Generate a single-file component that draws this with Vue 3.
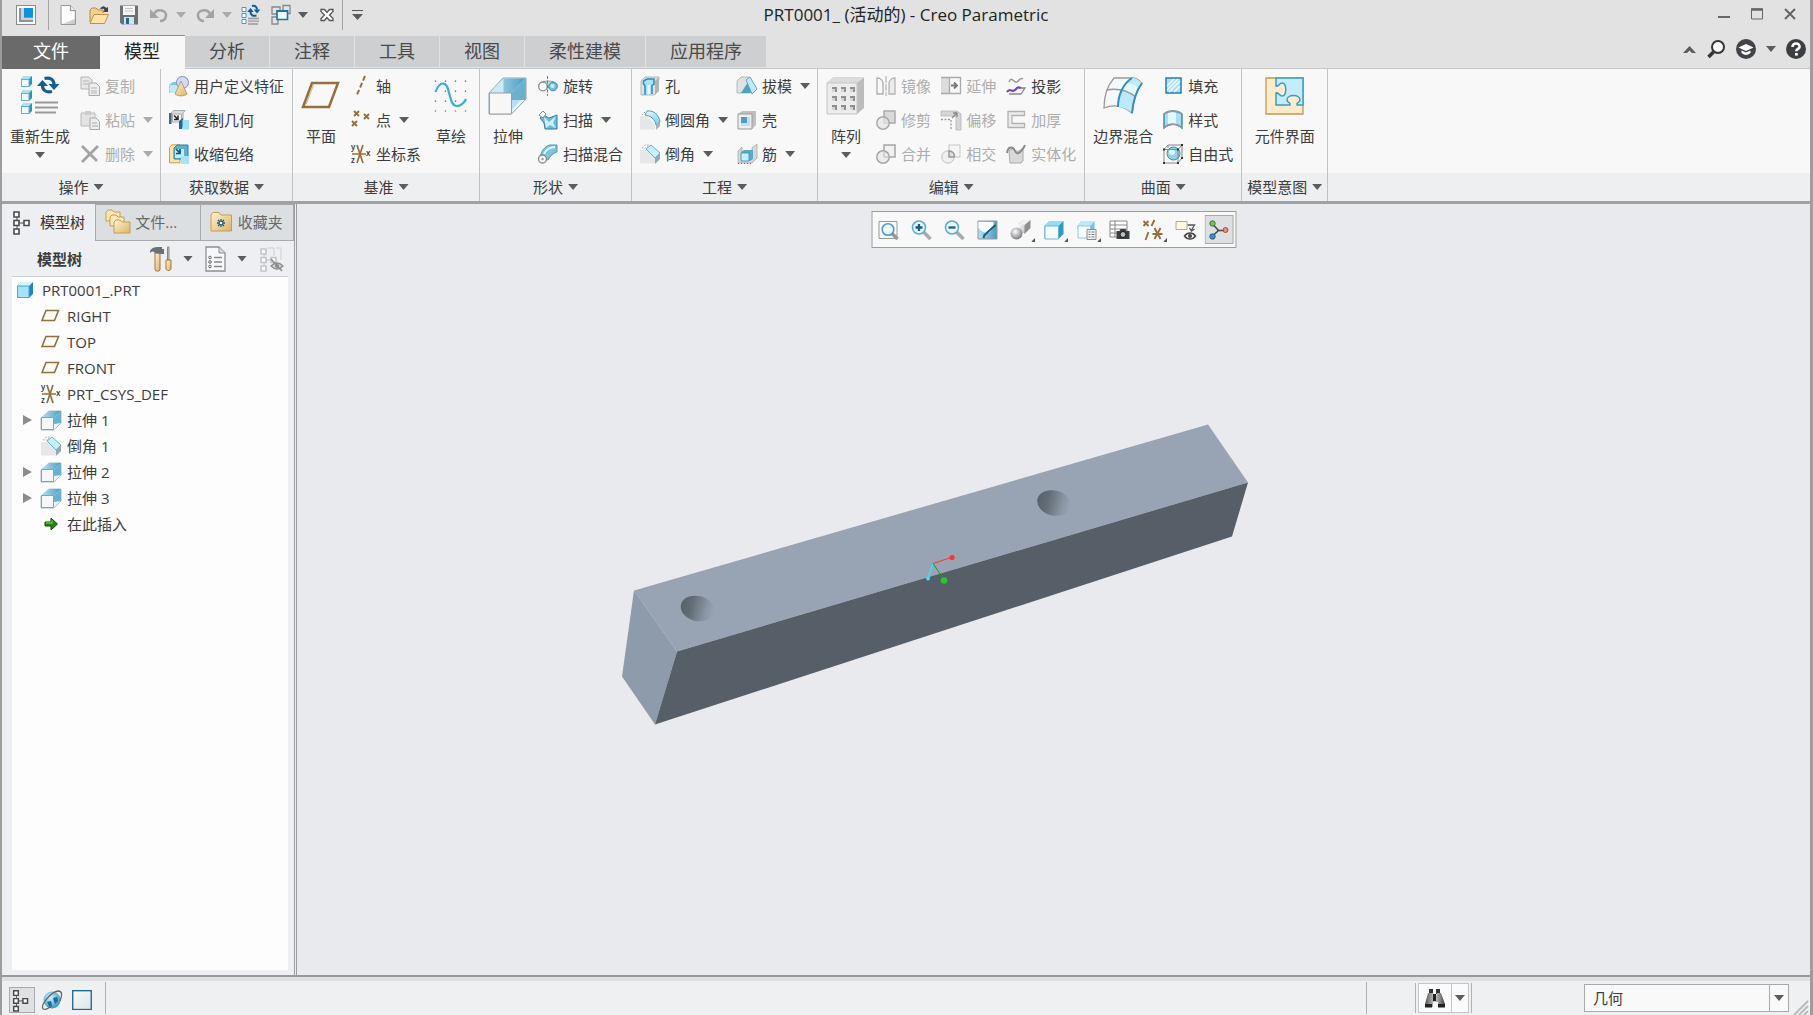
<template>
  <div class="window">
    <svg class="shared-defs" aria-hidden="true">
      <defs>
        <linearGradient id="g-blue" x1="0" y1="0" x2="1" y2="1">
          <stop offset="0" stop-color="#f0fbff" />
          <stop offset="1" stop-color="#7fc8e4" />
        </linearGradient>
        <linearGradient id="g-deep" x1="0" y1="0" x2="1" y2="0">
          <stop offset="0" stop-color="#b5e2f2" />
          <stop offset="1" stop-color="#4a9cc0" />
        </linearGradient>
        <linearGradient id="g-grey" x1="0" y1="0" x2="1" y2="1">
          <stop offset="0" stop-color="#fafafa" />
          <stop offset="1" stop-color="#c4c4c4" />
        </linearGradient>
        <linearGradient id="g-gold" x1="0" y1="0" x2="1" y2="1">
          <stop offset="0" stop-color="#fff4d4" />
          <stop offset="1" stop-color="#dcb466" />
        </linearGradient>
        <linearGradient id="g-dark" x1="0" y1="0" x2="1" y2="0">
          <stop offset="0" stop-color="#555" />
          <stop offset="0.5" stop-color="#ccc" />
          <stop offset="1" stop-color="#444" />
        </linearGradient>
        <linearGradient id="g-hole" x1="0" y1="0" x2="1" y2="0">
          <stop offset="0" stop-color="#59626b" />
          <stop offset="0.3" stop-color="#626c76" />
          <stop offset="0.75" stop-color="#8995a4" />
          <stop offset="1" stop-color="#98a4b4" />
        </linearGradient>
        <radialGradient id="g-ball" cx="0.4" cy="0.35" r="0.7">
          <stop offset="0" stop-color="#fff" />
          <stop offset="1" stop-color="#6f7276" />
        </radialGradient>
        <radialGradient id="g-globe" cx="0.4" cy="0.35" r="0.7">
          <stop offset="0" stop-color="#d5f3ff" />
          <stop offset="1" stop-color="#2491c4" />
        </radialGradient>
      </defs>
    </svg>

    <header class="titlebar">
      <div class="quick">
        <button class="quick-btn app" title="Creo"><svg viewBox="0 0 20 20" v-html="icons.app" /></button>
        <i class="quick-sep"></i>
        <template v-for="q in quickTools" :key="q.icon">
          <button class="quick-btn" :title="q.title">
            <svg viewBox="0 0 20 20" v-html="icons[q.icon]" />
          </button>
          <button v-if="q.menu" class="quick-arrow" :title="q.title + '菜单'">
            <span class="arrow" :class="{ off: q.off }"></span>
          </button>
        </template>
        <i class="quick-sep end"></i>
        <button class="quick-more" title="自定义"><span class="arrow wide"></span></button>
      </div>
      <h1 class="title">PRT0001_ (活动的) - Creo Parametric</h1>
      <div class="win-controls">
        <button v-for="w in ['minimize', 'maximize', 'close']" :key="w" :title="w">
          <svg viewBox="0 0 14 14" v-html="icons[w]" />
        </button>
      </div>
    </header>

    <nav class="tabbar">
      <button class="tab file">文件</button>
      <button
        v-for="t in tabs"
        :key="t"
        class="tab"
        :class="{ active: t === activeTab }"
        @click="activeTab = t"
      >{{ t }}</button>
      <div class="tab-tools">
        <button title="最小化功能区"><svg class="chev" viewBox="0 0 13 7"><path d="M0 7 6.500 0 13 7H9L6.500 4.500 4 7Z" fill="#5c5c5c" /></svg></button>
        <button title="搜索"><svg class="tool" viewBox="0 0 20 20" v-html="icons.search" /></button>
        <button title="学习"><svg class="tool" viewBox="0 0 20 20" v-html="icons.learn" /></button>
        <button title="学习菜单"><span class="arrow"></span></button>
        <button title="帮助"><svg class="tool" viewBox="0 0 20 20" v-html="icons.help" /></button>
      </div>
    </nav>

    <section class="ribbon">
      <div v-for="g in groups" :key="g.name" class="group">
        <div class="group-body">
          <template v-for="(c, i) in g.cols" :key="i">
            <button v-if="c.big" class="big">
              <svg viewBox="0 0 40 40" v-html="icons[c.big]" />
              <span>{{ c.label }}</span>
              <span v-if="c.menu" class="arrow"></span>
            </button>
            <div v-else class="col">
              <button
                v-for="r in c.rows"
                :key="r.label"
                class="cmd"
                :class="{ off: r.off }"
                :disabled="r.off"
              >
                <svg viewBox="0 0 20 20" v-html="icons[r.icon]" />
                <span>{{ r.label }}</span>
                <span v-if="r.menu" class="arrow" :class="{ off: r.off }"></span>
              </button>
            </div>
          </template>
        </div>
        <button class="group-name">{{ g.name }}<span class="arrow"></span></button>
      </div>
      <div class="ribbon-rest"></div>
    </section>

    <main class="work">
      <aside class="sidebar">
        <div class="side-tabs">
          <button class="side-tab active"><svg viewBox="0 0 26 26" v-html="icons.treeTab" />模型树</button>
          <button class="side-tab files"><svg viewBox="0 0 26 26" v-html="icons.folders" />文件...</button>
          <button class="side-tab"><svg viewBox="0 0 26 26" v-html="icons.favorite" />收藏夹</button>
        </div>
        <div class="tree-head">
          <strong>模型树</strong>
          <button title="设置"><svg viewBox="0 0 26 26" v-html="icons.tools" /><span class="arrow"></span></button>
          <button title="显示"><svg viewBox="0 0 26 26" v-html="icons.list" /><span class="arrow"></span></button>
          <button title="隐藏"><svg viewBox="0 0 26 26" v-html="icons.treeHide" /></button>
        </div>
        <ul class="tree">
          <li class="root"><svg viewBox="0 0 20 20" v-html="icons.part" />PRT0001_.PRT</li>
          <li v-for="n in nodes" :key="n.name">
            <i class="expander" :class="{ shown: n.children }"></i>
            <svg viewBox="0 0 20 20" v-html="icons[n.icon]" />{{ n.name }}
          </li>
        </ul>
      </aside>

      <section class="canvas">
        <svg class="model" viewBox="297 205 1513 770" preserveAspectRatio="xMidYMid meet">
          <polygon points="634,591 1208,425 1248,483 677,652" fill="#98a4b4" />
          <polygon points="634,591 677,652 655,725 622,677" fill="#8e9baa" />
          <polygon points="677,652 1248,483 1232,537 655,725" fill="#565f67" />
          <ellipse cx="697.500" cy="609" rx="17" ry="12.500" fill="url(#g-hole)" transform="rotate(14 697.500 609)" />
          <ellipse cx="1054" cy="503.500" rx="17" ry="12.500" fill="url(#g-hole)" transform="rotate(14 1054 503.500)" />
          <path d="M933 564 951 558" stroke="#f33" />
          <path d="M933 564 928 579" stroke="#2fe8f8" stroke-width="1.300" />
          <path d="M933 564 944 580" stroke="#1a9a1a" />
          <circle cx="952" cy="558" r="2.600" fill="#f33" />
          <circle cx="928" cy="579" r="2" fill="#2fe8f8" />
          <circle cx="944" cy="581" r="3.300" fill="#22cc22" />
        </svg>
        <div class="view-bar">
          <button
            v-for="v in viewTools"
            :key="v.icon"
            :title="v.title"
            :class="{ on: v.on, more: v.more }"
          >
            <svg viewBox="0 0 20 20" v-html="icons[v.icon]" />
          </button>
        </div>
      </section>
    </main>

    <footer class="status">
      <button class="status-btn on" title="模型树"><svg viewBox="0 0 26 26" v-html="icons.treeTab" /></button>
      <button class="status-btn" title="浏览器"><svg viewBox="0 0 20 20" v-html="icons.globe" /></button>
      <button class="status-btn" title="全屏"><svg viewBox="0 0 20 20" v-html="icons.screen" /></button>
      <i class="status-sep"></i>
      <i class="status-sep push"></i>
      <div class="find">
        <button title="查找"><svg viewBox="0 0 20 20" v-html="icons.binoculars" /></button>
        <button class="find-menu" title="查找菜单"><span class="arrow"></span></button>
      </div>
      <div class="filter">
        <select v-model="filter" aria-label="选择过滤器">
          <option>几何</option>
          <option>特征</option>
          <option>基准</option>
        </select>
        <span class="filter-arrow"><span class="arrow"></span></span>
      </div>
      <svg class="grip" viewBox="0 0 14 14"><path d="M0 14 14 0M5 14 14 5M10 14 14 10" stroke="#b9bcbf" stroke-width="2" /></svg>
    </footer>
  </div>
</template>

<script setup>
import { ref } from 'vue'

const activeTab = ref('模型')
const filter = ref('几何')

const tabs = ['模型', '分析', '注释', '工具', '视图', '柔性建模', '应用程序']

const quickTools = [
  { icon: 'newFile', title: '新建' },
  { icon: 'open', title: '打开' },
  { icon: 'save', title: '保存' },
  { icon: 'undo', title: '撤消', menu: true, off: true },
  { icon: 'redo', title: '重做', menu: true, off: true },
  { icon: 'regenSmall', title: '重新生成' },
  { icon: 'windows', title: '窗口', menu: true },
  { icon: 'closeWin', title: '关闭' }
]

const groups = [
  {
    name: '操作',
    cols: [
      { big: 'regen', label: '重新生成', menu: true },
      {
        rows: [
          { icon: 'copy', label: '复制', off: true },
          { icon: 'paste', label: '粘贴', off: true, menu: true },
          { icon: 'remove', label: '删除', off: true, menu: true }
        ]
      }
    ]
  },
  {
    name: '获取数据',
    cols: [
      {
        rows: [
          { icon: 'udf', label: '用户定义特征' },
          { icon: 'copyGeom', label: '复制几何' },
          { icon: 'shrink', label: '收缩包络' }
        ]
      }
    ]
  },
  {
    name: '基准',
    cols: [
      { big: 'plane', label: '平面' },
      {
        rows: [
          { icon: 'axis', label: '轴' },
          { icon: 'point', label: '点', menu: true },
          { icon: 'csys', label: '坐标系' }
        ]
      },
      { big: 'sketch', label: '草绘' }
    ]
  },
  {
    name: '形状',
    cols: [
      { big: 'extrude', label: '拉伸' },
      {
        rows: [
          { icon: 'revolve', label: '旋转' },
          { icon: 'sweep', label: '扫描', menu: true },
          { icon: 'sweepBlend', label: '扫描混合' }
        ]
      }
    ]
  },
  {
    name: '工程',
    cols: [
      {
        rows: [
          { icon: 'hole', label: '孔' },
          { icon: 'round', label: '倒圆角', menu: true },
          { icon: 'chamfer', label: '倒角', menu: true }
        ]
      },
      {
        rows: [
          { icon: 'draft', label: '拔模', menu: true },
          { icon: 'shell', label: '壳' },
          { icon: 'rib', label: '筋', menu: true }
        ]
      }
    ]
  },
  {
    name: '编辑',
    cols: [
      { big: 'pattern', label: '阵列', menu: true },
      {
        rows: [
          { icon: 'mirror', label: '镜像', off: true },
          { icon: 'trim', label: '修剪', off: true },
          { icon: 'merge', label: '合并', off: true }
        ]
      },
      {
        rows: [
          { icon: 'extend', label: '延伸', off: true },
          { icon: 'offset', label: '偏移', off: true },
          { icon: 'intersect', label: '相交', off: true }
        ]
      },
      {
        rows: [
          { icon: 'project', label: '投影' },
          { icon: 'thicken', label: '加厚', off: true },
          { icon: 'solidify', label: '实体化', off: true }
        ]
      }
    ]
  },
  {
    name: '曲面',
    cols: [
      { big: 'blend', label: '边界混合' },
      {
        rows: [
          { icon: 'fill', label: '填充' },
          { icon: 'style', label: '样式' },
          { icon: 'freestyle', label: '自由式' }
        ]
      }
    ]
  },
  {
    name: '模型意图',
    cols: [{ big: 'puzzle', label: '元件界面' }]
  }
]

const nodes = [
  { icon: 'planeSmall', name: 'RIGHT' },
  { icon: 'planeSmall', name: 'TOP' },
  { icon: 'planeSmall', name: 'FRONT' },
  { icon: 'csys', name: 'PRT_CSYS_DEF' },
  { icon: 'extrudeSmall', name: '拉伸 1', children: true },
  { icon: 'chamfer', name: '倒角 1' },
  { icon: 'extrudeSmall', name: '拉伸 2', children: true },
  { icon: 'extrudeSmall', name: '拉伸 3', children: true },
  { icon: 'insert', name: '在此插入' }
]

const viewTools = [
  { icon: 'refit', title: '重新调整' },
  { icon: 'zoomIn', title: '放大' },
  { icon: 'zoomOut', title: '缩小' },
  { icon: 'repaint', title: '重画' },
  { icon: 'shading', title: '渲染选项', more: true },
  { icon: 'display', title: '显示样式', more: true },
  { icon: 'saved', title: '已保存方向', more: true },
  { icon: 'views', title: '视图管理器' },
  { icon: 'datums', title: '基准显示过滤器', more: true },
  { icon: 'notes', title: '注释显示' },
  { icon: 'spin', title: '旋转中心', on: true }
]

const cube = (x, y) =>
  `<path d="M${x} ${y + 3}l3-3h8v8l-3 3H${x}z" fill="#2f93bd"/><path d="M${x} ${y + 3}l3-3h8l-3 3z" fill="#a9e2f5"/><path d="M${x + 0.5} ${y + 3.5}h7.500v7h-7.500z" fill="#f1fbff" stroke="#5fb4d4"/>`

const cross = (x, y) => `<path d="M${x} ${y}l5 5m0-5l-5 5" stroke="#94703c" stroke-width="1.900"/>`

const nodeBoxes = (color) =>
  `<path d="M7 8v12M9 14h8" stroke="${color}" /><g fill="#fff" stroke="${color}" stroke-width="1.600"><path d="M4 3h5v5H4zM4 11.500h5v5H4zM4 20h5v5H4zM14 11.500h5v5h-5z"/></g>`

const icons = {
  // title bar
  app: '<rect x=".5" y=".5" width="19" height="19" fill="#fff" stroke="#8b8b8b"/><path d="M3 3h14v14H3z" fill="#8b949b"/><path d="M5 3h3v10h9v2H5z" fill="#ccd3d8"/><path d="M8 3h9v9H8z" fill="#0d93dc"/>',
  newFile: '<path d="M2 .5h9.500l5 5v14H2z" fill="url(#g-grey)" stroke="#9a9a9a"/><path d="M3 1.500h7.500v5h5V14L3 19z" fill="#fff"/><path d="M11.500.5v5h5" fill="#eee" stroke="#999"/>',
  open: '<path d="M1 17V5l2-2h4l2 2h5v3" fill="#f3d18b" stroke="#b98a3d"/><path d="M1 18.500 5 9.500h14.500l-4 9z" fill="#fbe3ad" stroke="#c19343"/><path d="M11 4c2-4 5-3 6-1l2-1v5h-5l1.500-2c-1-2-2-1-4.500-1z" fill="#444"/>',
  save: '<path d="M1 .5h18v19H3l-2-2z" fill="#6a7176"/><path d="M4 1h12v9H4z" fill="#f4f4f4"/><path d="M6 3.500h8M6 6h8" stroke="#c5c5c5"/><path d="M5 12h10v7.500H5z" fill="#cfe5ee"/><path d="M7 13h3v6H7z" fill="#2c6580"/>',
  undo: '<path d="M5 9c3-6 13-4 12 2-.5 3-3 5-6 5" fill="none" stroke="#a3a3a3" stroke-width="2.500"/><path d="M1 4v9h9z" fill="#a3a3a3"/>',
  redo: '<path d="M15 9C12 3 2 5 3 11c.5 3 3 5 6 5" fill="none" stroke="#a3a3a3" stroke-width="2.500"/><path d="M19 4v9h-9z" fill="#a3a3a3"/>',
  regenSmall: '<g fill="#fff" stroke="#3c9dc4"><path d="M1 2.500h4v4H1zM1 8.500h4v4H1zM1 14.500h4v4H1z"/></g><path d="M7 13.500h11M7 16.200h11M7 19h10" stroke="#999" stroke-width="1.300"/><path d="M11 1c3-1 5 1 5 3.500M15.500 10.500c-4 1-6-1-6-3.500" fill="none" stroke="#0d5c94" stroke-width="2"/><path d="M12.800 4.500h6.500L16 8.500zM6.200 7h6.500L9.500 3z" fill="#0d5c94"/>',
  windows: '<path d="M1 2h8v7H1zM12 .5h7v8h-7zM1 12h6v7H1z" fill="#e5e5e5" stroke="#888" stroke-width="1.300"/><path d="M6 6h10.500v8.500H6z" fill="#eefaff" stroke="#1876a6" stroke-width="1.600"/><path d="M5.200 6h12" stroke="#1876a6" stroke-width="2"/>',
  closeWin: '<path d="M4 4.500h3.500L10 7.500l2.500-3H16v2L12.500 10l3.500 3.500v2h-3.500l-2.500-3-2.500 3H4v-2L7.500 10 4 6.500z" fill="#fff" stroke="#555" stroke-width="1.300"/>',
  minimize: '<path d="M1 10h12" stroke="#666" stroke-width="2"/>',
  maximize: '<path d="M1.500 2h11v10h-11z" fill="none" stroke="#666"/><path d="M1 2.500h12" stroke="#666" stroke-width="2.500"/>',
  close: '<path d="m2 2 10 10M12 2 2 12" stroke="#666" stroke-width="2"/>',
  search: '<circle cx="12" cy="8" r="6" fill="#f7fafc" stroke="#333" stroke-width="2"/><path d="m7.500 13-5 5" stroke="#333" stroke-width="3.500"/>',
  learn: '<circle cx="10" cy="10" r="10" fill="#404347"/><path d="m2.500 8.500 7.500-3.500 7.500 3.500L10 12z" fill="#fff"/><path d="M5.500 11.500v2.500c3 2.500 6 2.500 9 0v-2.500L10 13.500z" fill="#fff"/>',
  help: '<circle cx="10" cy="10" r="10" fill="#3c3e41"/><path d="M6.500 8c0-5 7.500-4.500 7 0-.3 2-3.200 2-3.200 4.300" fill="none" stroke="#fff" stroke-width="2.600"/><path d="M9 14h2.800v2.600H9z" fill="#fff"/>',

  // ribbon, large
  regen: `${cube(1, 0)}${cube(1, 14)}${cube(1, 27)}<path d="M15 26.500h23M15 31.500h23M15 36.500h21" stroke="#999" stroke-width="2"/><path d="M24.500 2.500c6-1.500 9.500 1.500 9.500 6M32 15.500c-6 1.500-9.500-1.500-9.500-6" fill="none" stroke="#125e92" stroke-width="3.200"/><path d="M28.500 8h11L34 14zM17 10h11l-5.500-6z" fill="#125e92"/>`,
  plane: '<path d="M2 31 11 7h26L28 31z" fill="none" stroke="#94703c" stroke-width="2.500"/><path d="M5 28.500 12.500 9" stroke="#cdb184" fill="none"/>',
  sketch: '<path d="M4.500 4.500v31M14.500 4.500v31M24.500 4.500v31M34.500 4.500v31" stroke="#555" stroke-width="1.300" stroke-dasharray="1.300 8.700"/><path d="M4.500 16C7 9 9 7.500 12 7.500c8 0 5 22.500 13.500 22.500 4 0 7-2 9.500-7" fill="none" stroke="#3aaee0" stroke-width="2.200"/>',
  extrude: '<path d="M1 17 15 2h23v21L23 38H1z" fill="#eef6fa" stroke="#8fa6b0"/><path d="M1.500 17 15.500 2.500H37.500L23.500 17z" fill="url(#g-deep)"/><path d="M15.500 2.500V17H2z" fill="#ccebf6"/><path d="M23.500 17 37.500 2.500v22l-14-.5z" fill="#6bb0cd"/><path d="M23.500 38V34L33 24h4.500z" fill="#e2f8ff"/><path d="M23.500 34V24H33z" fill="#b5dff0"/><path d="M1.500 17h22v21h-22z" fill="#f7f7f7" stroke="#9c9c9c"/><path d="M37.500 2.500v21L23.500 38" fill="none" stroke="#9aa7ad"/>',
  pattern: '<path d="M1 7 7 1.500h31V32l-7 6H1z" fill="#bcbcbc"/><path d="M1 7 7 1.500h31L31 7z" fill="#dcdcdc"/><path d="M1 7h30v31H1z" fill="#ececec" stroke="#c4c4c4"/><g fill="#8f8f8f"><path d="M6 11h5v5H6zM15 11h5v5h-5zM24 11h5v5h-5zM6 20h5v5H6zM15 20h5v5h-5zM24 20h5v5h-5zM6 29h5v5H6zM15 29h5v5h-5zM24 29h5v5h-5z"/></g><g fill="#d6d6d6"><path d="M6 13h3v3H6zM15 13h3v3h-3zM24 13h3v3h-3zM6 22h3v3H6zM15 22h3v3h-3zM24 22h3v3h-3zM6 31h3v3H6zM15 31h3v3h-3zM24 31h3v3h-3z"/></g>',
  blend: '<path d="M1 32C1 20 5 9 11 2h18c4 0 7 2 10 5-6 8-9 19-10 30-8-7-18-9-28-5z" fill="#f4f8fa" stroke="#999" stroke-width="1.300"/><path d="M29 2c4 0 7 2 10 5-6 8-9 19-10 30-4-4-9-6-14-6 1-12 5-22 14-29z" fill="#bdeafa"/><path d="M24 7c4 0 9 2 12 6l-4 8c-4-3-9-6-14-6z" fill="#e2f7fe"/><path d="M4 14c11-2 21 1 29 7" fill="none" stroke="#999" stroke-width="1.500"/><path d="M29 2c-9 6-14 17-14 29M39 7c-6 8-9 19-10 30" fill="none" stroke="#2f8fbc" stroke-width="2"/>',
  puzzle: '<path d="M1 2h37v36H1z" fill="#fdebc9" stroke="#bd9a52" stroke-width="1.300"/><path d="M11 2h27v27h-6c-1-3 3-2 3-5 0-6-13-6-13 0 0 3 4 2 3 5H11V17c3-1 3 3 6 3 5 0 5-13 0-13-3 0-3 4-6 3z" fill="#c5ecfa" stroke="#3a9cc6" stroke-width="1.500"/>',

  // ribbon, small
  copy: '<path d="M1 1h8l3 3v9H1z" fill="#e7e7e7" stroke="#b5b5b5"/><path d="M9 7h7l3.500 3.500v9H9z" fill="#eee" stroke="#a8a8a8"/><path d="M3 5h6M3 8h5M11 12h6M11 15h6M11 17h6" stroke="#b5b5b5"/>',
  paste: '<path d="M1 3h14v13H1z" fill="#e3e3e3" stroke="#bbb"/><path d="M5 1h6v4H5z" fill="#ccc"/><path d="M10 8h6l3.500 3.500v8H10z" fill="#eee" stroke="#a8a8a8"/><path d="M12 13h5M12 16h6" stroke="#aaa"/>',
  remove: '<path d="m2 2 15 15M18 2 2 18" stroke="#a3a3a3" stroke-width="2.800"/>',
  udf: '<path d="m0 9 4-3h9v8l-3 3H0z" fill="#79c7e4"/><path d="M.5 9h10v8H.5z" fill="#bfe9f7"/><circle cx="13.500" cy="6.500" r="6" fill="#d3daf6" stroke="#7f8cc6"/><path d="M12 5 6 18c3 2.500 9 2.500 12 0z" fill="url(#g-gold)" stroke="#b58b48" stroke-width=".8"/>',
  copyGeom: '<path d="M2 3 5 .5h11L14 3v7H2z" fill="#dcdcdc" stroke="#aaa"/><path d="M0 3h2.500v11H0z" fill="#466a80"/><path d="M3.500 4h9v8h-9z" fill="#f4f4f4" stroke="#aaa"/><path d="m5 5.500 3.500 3.500M9 5.500v4H5" stroke="#222" stroke-width="1.500" fill="none"/><path d="M10 11l4-3v8l-1 3h-3z" fill="#1c6a94"/><path d="M13.500 10H20v9.500h-6.500z" fill="#9be0fb"/>',
  shrink: '<path d="M.5 3.500 3 .8h8v18H.5z" fill="#fbe3ad" stroke="#c99c4a"/><path d="M5 4 8 1h11v11l-3 3H5z" fill="#5cb2d4" stroke="#2a82aa"/><path d="M6 5h9v9H6z" fill="#c2ecfa"/><path d="m7 5 4 4m0-4v4.500H7" stroke="#14506e" stroke-width="1.700" fill="none"/><path d="M12 12h8v8h-8z" fill="#a5e5fb"/>',
  axis: '<path d="m14 0-8.500 20" stroke="#94703c" stroke-width="2" stroke-dasharray="5 2.500"/>',
  point: `${cross(3, 1)}${cross(13, 4)}${cross(1, 11)}`,
  csys: '<path d="M1 10h14M6 1l6 18M12 1 6 19" stroke="#94703c" stroke-width="1.700"/><g fill="#333" font-family="Open Sans, sans-serif" font-size="8" font-weight="600"><text x="0" y="6">y</text><text x="0" y="19">z</text><text x="15" y="12">x</text></g>',
  revolve: '<path d="M1 8c3-4 15-4 18 0v3H1z" fill="#bfe2ee" stroke="#8aa"/><circle cx="5" cy="10.500" r="4.300" fill="#fafafa" stroke="#8d8d8d" stroke-width="1.300"/><circle cx="15" cy="10.500" r="4.300" fill="#6fc1e0" stroke="#3a8fb5"/><circle cx="14.500" cy="10" r="2" fill="#d5f2fb"/><path d="M9.500 0v20" stroke="#777" stroke-dasharray="3 1.500"/>',
  sweep: '<path d="m5 5 6 3 8-3v14H7L6 13 2 8z" fill="#6bbbd9" stroke="#2d82a6"/><path d="m6 7 5 5 7-6-3 7 3 5-6-3-4 3z" fill="#cdf0fa"/><path d="m1 5 4-4 3 3-3 4z" fill="#fafafa" stroke="#888"/>',
  sweepBlend: '<path d="M2 14C3 7 7 2 12 1h7v7c-4 1-7 4-9 8z" fill="#7dc4e0" stroke="#5597b2"/><path d="M6 10c2-4 5-7 11-7" fill="none" stroke="#e8f9ff" stroke-width="2"/><circle cx="4.500" cy="15" r="4" fill="#f7f7f7" stroke="#888" stroke-width="1.300"/><circle cx="4.500" cy="15" r="1.200" fill="#999"/>',
  hole: '<path d="m1 5 4-4h14l-1 14-4 4H1z" fill="#e1e1e1" stroke="#aaa" stroke-width=".8"/><path d="m15 5 4-4v14l-4 4z" fill="#b4b4b4"/><path d="M5 19V9.500L3.500 8V5L7 3h7v5l-2 1.500V18" fill="#a8e2f5" stroke="#2b8cb5" stroke-width="1.500"/><path d="M7.500 9H10v9H7.500z" fill="#e2f8ff"/>',
  round: '<path d="M0 6h7l8 9v4.500H0z" fill="#e5e6e8"/><path d="M2 5 5 2" stroke="#888" stroke-dasharray="1 2"/><path d="M7 1C14 0 19 5 20 12l-4 3C15 9 11 6 5 5z" fill="url(#g-blue)" stroke="#4ba0c2"/><path d="m16 15 4-3v4l-4 4z" fill="#a9b2b6"/>',
  chamfer: '<path d="M0 6h6l9 8v5.500H0z" fill="#e6e7e9"/><path d="m2 4 3-3h4L6 4z" fill="#fff" stroke="#bbb" stroke-dasharray="2 1"/><path d="m6 5 5-4 9 8-5 5z" fill="#c8f0fb" stroke="#64b1cb"/><path d="m15 14 5-5v6l-5 5z" fill="#95a9b2"/>',
  draft: '<path d="m0 5 4-4h8l1 16H0z" fill="#e1e1e1" stroke="#aaa" stroke-width=".8"/><path d="m4 17 7-11 4 11z" fill="#50a1c3"/><path d="m9 4 4-3 7 12-5 5z" fill="#bfeafa" stroke="#5aa9c7"/>',
  shell: '<path d="m1 4 4-3h14v14l-4 4H1z" fill="#c0c0c0"/><path d="M1 4h14v15H1z" fill="#eee" stroke="#999"/><path d="M4 7h9v9H4z" fill="#4d9dc0"/><path d="M4 13h6V7h3v9H4z" fill="#b9e3f1"/>',
  rib: '<path d="M1 19V7l4-4v12h10V4l5-4v14l-5 5z" fill="#d5d7d9" stroke="#aaa" stroke-width=".8"/><path d="m4 8 3-2h9v9l-3 2H4z" fill="#57a9c9"/><path d="M4 9h8v8H4z" fill="#c4effb" stroke="#4a9cbc"/><path d="M1 19.500h15" stroke="#666" stroke-dasharray="1 2"/>',
  mirror: '<path d="M1 2c4 0 6 3 6 6v10H1z" fill="none" stroke="#adadad" stroke-width="1.300"/><path d="M19 2c-4 0-6 3-6 6v10h6z" fill="#ececec" stroke="#b5b5b5" stroke-width="1.300"/><path d="M10 0v20" stroke="#aaa" stroke-dasharray="7 1"/>',
  trim: '<path d="M8 1h11v12H8z" fill="#dadada" stroke="#aaa" stroke-width="1.500"/><circle cx="7" cy="13" r="6.200" fill="#e5e5e5" fill-opacity=".7" stroke="#aaa" stroke-width="1.500"/>',
  merge: '<path d="M8 1h11v12H8z" fill="#f1f1f1" stroke="#a5a5a5" stroke-width="1.500"/><circle cx="7" cy="13" r="6.200" fill="#ededed" stroke="#a5a5a5" stroke-width="1.500"/><path d="M8 7v6h5" fill="none" stroke="#bbb"/>',
  extend: '<path d="M0 2h9v15H0z" fill="#dcdcdc"/><path d="M0 1.500h19.500v16H0M8.500 1.500v16" fill="none" stroke="#aaa" stroke-width="1.300"/><path d="M10 9.500h6M13 6.500l3 3-3 3" fill="none" stroke="#777" stroke-width="1.800"/>',
  offset: '<path d="M0 1h16l4 3v16h-5V6H0z" fill="#d5d5d5" stroke="#b5b5b5" stroke-width=".8"/><path d="M0 9.500h10v10" fill="none" stroke="#999" stroke-dasharray="2 1.500" stroke-width="1.300"/><path d="m11 8 5-5m-4 0h4v4" fill="none" stroke="#888" stroke-width="1.300"/>',
  intersect: '<path d="M8 1h11v12H8z" fill="#f5f5f5" stroke="#c5c5c5"/><circle cx="7" cy="13" r="6.200" fill="#f0f0f0" stroke="#c0c0c0"/><path d="M8 7c4 0 6 3 5.300 6H8z" fill="#ddd" stroke="#999" stroke-width="1.500"/>',
  project: '<path d="M3 6c3-7 5 2 8 0s3-5 6-3" fill="none" stroke="#999" stroke-width="1.500"/><path d="M3 18h12l4-6h-4" fill="none" stroke="#888" stroke-width="1.300"/><path d="M1 16c3-5 5 1 8-2s3-3 6-2" fill="none" stroke="#7940bd" stroke-width="2.200"/>',
  thicken: '<path d="M18.500 1.500H2v16h16.500v-4H6v-8h12.500z" fill="#ececec" stroke="#b1b1b1" stroke-width="1.300"/>',
  solidify: '<path d="M3 7c4-5 7 2 10 0l4-3v13l-2 2H4z" fill="#d9d9d9" stroke="#aaa"/><path d="M1 9c1-7 6-7 8-2s7 1 10-6" fill="none" stroke="#888" stroke-width="1.900"/>',
  fill: '<path d="M3 2h15v15H3z" fill="#aee2f3" stroke="#207fab" stroke-width="1.500"/><path d="m4 10 7-7M4 14 15 3M6 16 17 5M11 16l6-6" stroke="#f3fcff" stroke-width="1.300"/>',
  style: '<path d="M1 4c5-4 13-4 18 0v14c-5-5-13-5-18 0z" fill="#a7dff2" stroke="#2e7b9c" stroke-width="1.300"/><path d="M5 3c3-1 6-1 8 0v11c-3-1-5-1-8 0z" fill="#e5f8fe"/><path d="M1 4c5-4 13-4 18 0M1 18c5-5 13-5 18 0" fill="none" stroke="#999" stroke-width="1.500"/>',
  freestyle: '<circle cx="10.500" cy="9.500" r="6.500" fill="#8bd3ee" stroke="#368fb7"/><circle cx="9" cy="8" r="3" fill="#dff7ff"/><path d="M1 5.500h14V19H1zM1 5.500 5 1h14v13l-4 5M15 5.500 19 1M5 1v3" fill="none" stroke="#888"/><path d="M0 4.500h2v2H0zM14 4.500h2v2h-2zM0 18h2v2H0zM14 18h2v2h-2zM18 0h2v2h-2zM18 13h2v2h-2z" fill="#333"/>',

  // model tree
  treeTab: nodeBoxes('#4a4a4a'),
  folders: '<g fill="#fbe6b5" stroke="#c69c50"><path d="M1 3l2-2h4l2 2h6v9H1z"/><path d="M5 8l2-2h4l2 2h6v9H5z"/><path d="M9 13l2-2h4l2 2h8v11H9z" fill="url(#g-gold)"/></g>',
  favorite: '<path d="M3 6l2-2.500h6L13 6h10.500v16H3z" fill="url(#g-gold)" stroke="#c69c50"/><path d="M13 10v8M9 14h8M10 11l6 6M16 11l-6 6" stroke="#145a80" stroke-width="1.300"/><circle cx="13" cy="14" r="1.300" fill="#fff"/>',
  tools: '<path d="M6 7h5v17c-1 1.500-4 1.500-5 0z" fill="url(#g-gold)" stroke="#a9762f"/><path d="M1 5c2-4 5-4 12-4v2h2v5h-2L6 7C4 5 3 5 1 7z" fill="#6b7075"/><path d="M18.500 1h1.500v13h-1.500z" stroke="#888" fill="#ccc"/><path d="M17 14h5v9c-1 2-4 2-5 0z" fill="url(#g-gold)" stroke="#a9762f"/>',
  list: '<path d="M3 1h13l6 6v18H3z" fill="#f6f8fa" stroke="#8a9096" stroke-width="1.300"/><path d="M16 1v6h6" fill="#d5dade" stroke="#8a9096"/><path d="M11 11.500h8M11 16h8M11 20.500h8" stroke="#888" stroke-width="1.300"/><g fill="none" stroke="#666"><circle cx="7" cy="11.500" r="1.300"/><circle cx="7" cy="16" r="1.300"/><circle cx="7" cy="20.500" r="1.300"/></g>',
  treeHide: `<g opacity=".6">${nodeBoxes('#aaa')}<path d="M11 2h6v8M19 2h5v12" fill="none" stroke="#bbb"/></g><path d="M14 20c4-4 8-4 12 0-4 4-8 4-12 0z" fill="#d5d5d5" stroke="#8d8d8d" stroke-width="1.300"/><circle cx="20" cy="20" r="2" fill="#888"/><path d="m14 13 11 12" stroke="#8d8d8d" stroke-width="1.500"/>`,
  part: '<path d="m1 6 4-4h12v12l-4 4H1z" fill="#1f88b5"/><path d="m1 6 4-4h12l-4 4z" fill="#d5f4fd"/><path d="M1.500 6H13v11.500H1.500z" fill="#a3e2f9" stroke="#4ca9cd"/>',
  planeSmall: '<path d="m1 14.500 4-10h12.500l-4 10z" fill="#fffdf8" stroke="#94703c" stroke-width="1.600"/>',
  extrudeSmall: '<path d="m0 8 8-7h12v12l-7 7H0z" fill="#eaf6fb" stroke="#8fb3c2" stroke-width=".8"/><path d="m1 7 7-6h12l-7 7z" fill="url(#g-deep)"/><path d="m13 8 7-7v12l-7 1z" fill="#66b2d1"/><path d="M.5 7.500h12v12H.5z" fill="#f7f7f7" stroke="#9c9c9c"/>',
  insert: '<path d="M4 8h6V4l6.500 6L10 16v-4H4z" fill="#268212" stroke="#184d0d"/><path d="M5 9h6V6.500" fill="none" stroke="#58c73c" stroke-width="1.500"/>',

  // graphics toolbar
  refit: '<path d="M.5 1.500h18v17H.5z" fill="#f8f8f8" stroke="#999"/><path d="m13 13 6 6" stroke="#999" stroke-width="3.500"/><circle cx="9.500" cy="9.500" r="5.800" fill="#e8f7fc" stroke="#4c9cc0" stroke-width="1.600"/>',
  zoomIn: '<path d="m12 12 7 7" stroke="#aaa" stroke-width="3.500"/><circle cx="7.500" cy="7.500" r="6.500" fill="#e6f7fd" stroke="#5eaccb" stroke-width="1.600"/><path d="M7.500 4v7M4 7.500h7" stroke="#155d86" stroke-width="2.300"/>',
  zoomOut: '<path d="m12 12 7 7" stroke="#aaa" stroke-width="3.500"/><circle cx="7.500" cy="7.500" r="6.500" fill="#e6f7fd" stroke="#5eaccb" stroke-width="1.600"/><path d="M4 7.500h7" stroke="#155d86" stroke-width="2.300"/>',
  repaint: '<path d="M.5 1h19v18H.5z" fill="url(#g-deep)" stroke="#999"/><path d="M1 2h15c1 5-2 9-5 11-3 0-7-1-10-5z" fill="#fafdff"/><path d="m6 18 1-3L18 5" fill="none" stroke="#155b84" stroke-width="2"/>',
  shading: '<path d="M8 4 13 0h7v8l-6 6z" fill="#8d9093"/><path d="M8 4 13 0h7l-6 5z" fill="#f2f2f2"/><path d="M8 4h6v9H8z" fill="url(#g-grey)"/><circle cx="6" cy="13.500" r="6" fill="url(#g-ball)"/>',
  display: '<path d="m1 6 5-5h14v13l-5 5H1z" fill="#2f98c4"/><path d="m1 6 5-5h14l-5 5z" fill="#97dcf5"/><path d="M1.500 6H15v13H1.500z" fill="#f5fcff" stroke="#6db9d4"/>',
  saved: '<path d="m1 6 4-5h13v8H1z" fill="#73c1de"/><path d="m1 6 4-5h13l-4 5z" fill="#bceafa"/><path d="M1.500 6H14v12H1.500z" fill="#f5fcff" stroke="#9ac5d6"/><path d="M10.500 9.500h9v10h-9z" fill="#f5f5f5" stroke="#888"/><path d="M12 12h2m1 0h3M12 14.500h2m1 0h3M12 17h2m1 0h3" stroke="#777"/>',
  views: '<path d="M.5 1h17v16H.5z" fill="#fff" stroke="#888"/><path d="M.5 5h17M.5 9h17M.5 13h8M5.500 1v16" stroke="#888"/><path d="M7 11h3l1-2h5l1 2h3v8H7z" fill="#3b4045"/><circle cx="13.500" cy="14.500" r="3" fill="#bbb" stroke="#111"/>',
  datums: '<path d="m1 1 5 5m0-5L1 6M12 0 9 6M6 12l-3 8M10 14h10M12 8l6 11M18 8l-6 11" stroke="#94703c" stroke-width="1.900"/>',
  notes: '<path d="M.5 1.500h11v8H.5z" fill="#fff8dc" stroke="#aaa"/><path d="M12 5h7l-3 5m-2-2 2 3 3-2" fill="none" stroke="#555" stroke-width="1.300"/><path d="M9 16c3-4 8-4 11 0-3 4-8 4-11 0z" fill="#fff" stroke="#444" stroke-width="1.500"/><circle cx="14.500" cy="16" r="2" fill="#444"/>',
  spin: '<path d="m4 4 6 6.500L4 16M10 10.500h7" fill="none" stroke="#444" stroke-width="1.500"/><circle cx="4" cy="3.500" r="2.700" fill="#73c35c" stroke="#39772e"/><circle cx="4" cy="16.500" r="2.700" fill="#3a91c4" stroke="#205d86"/><circle cx="17" cy="10" r="2.500" fill="#ef8a8a" stroke="#b44"/>',

  // status bar
  globe: '<circle cx="10" cy="10" r="8.500" fill="url(#g-globe)"/><path d="m5 12 4-1 1 5-2 2zM11 8l4-1 1 4-3 3z" fill="#176b98"/><path d="M1 19c-3-4 8-17 15-18 5 0 4 5 2 10M1 19c2 1 6-1 9-4" fill="none" stroke="#666" stroke-width="1.300"/>',
  screen: '<path d="M.8.8h18.400v18.400H.8z" fill="url(#g-grey)" stroke="#1b6990" stroke-width="1.500"/><path d="M1.500 1.500h17V19h-17z" fill="#f3fafd" fill-opacity=".6"/>',
  binoculars: '<path d="M4 1h4v5H4zM11 1h4v5h-4z" fill="#333"/><path d="M3 5h5l1 3h2l1-3h4l4 11v3h-7v-5H8v5H0v-3z" fill="url(#g-dark)"/><path d="M0 16h7v3.500H0zM13 16h7v3.500h-7zM8 6h3v7H8z" fill="#222"/>'
}
</script>

<style>
html,
body {
  margin: 0;
  height: 100%;
}
</style>

<style scoped>
.window {
  min-height: 100vh;
  box-sizing: border-box;
  display: flex;
  flex-direction: column;
  border-left: 2px solid #9d9d9d;
  border-right: 3px solid #9d9d9d;
  background: #e2e2e2;
  color: #3c3c3c;
  font-family: "Open Sans", "Noto Sans CJK SC", sans-serif;
  font-size: 15px;
  line-height: 20px;
}

.shared-defs {
  position: absolute;
  width: 0;
  height: 0;
}

button {
  display: flex;
  align-items: center;
  margin: 0;
  padding: 0;
  border: 0;
  background: none;
  color: inherit;
  font: inherit;
  white-space: nowrap;
}

svg {
  display: block;
  flex: none;
  fill: none;
  overflow: visible;
}

.arrow {
  flex: none;
  width: 10px;
  height: 6px;
  background: #5c5c5c;
  clip-path: polygon(0 0, 100% 0, 50% 100%);
}

.arrow.off {
  background: #ababab;
}

/* 标题栏 */
.titlebar {
  display: grid;
  grid-template-columns: 1fr auto 1fr;
  height: 35px;
}

.quick {
  display: flex;
  align-items: center;
  height: 30px;
}

.quick-btn {
  margin-left: 10px;
}

.quick-btn.app {
  margin-left: 14px;
}

.quick-btn svg {
  width: 20px;
  height: 20px;
}

.quick-arrow {
  margin-left: 7px;
}

.quick-arrow + .quick-btn {
  margin-left: 9px;
}

.quick-sep {
  width: 1px;
  height: 30px;
  margin-left: 12px;
  background: #a5a5a5;
}

.quick-sep.end {
  margin-left: 5px;
}

.quick-more {
  margin-left: 9px;
  border-top: 1px solid #555;
  padding-top: 3px;
}

.arrow.wide {
  width: 11px;
  height: 6px;
}

.title {
  margin: 0;
  color: #222;
  font-size: 17px;
  font-weight: 400;
  line-height: 30px;
}

.win-controls {
  display: flex;
  justify-content: flex-end;
  gap: 19px;
  height: 28px;
  padding-right: 13px;
}

.win-controls svg {
  width: 14px;
  height: 14px;
}

/* 选项卡 */
.tabbar {
  display: flex;
  align-items: stretch;
  height: 34px;
  box-sizing: border-box;
  border-bottom: 1px solid #c3c7ca;
}

.tab {
  height: 31px;
  box-sizing: border-box;
  margin: 1px 1px 0 0;
  padding: 0 24px 2px;
  background: #cdcfd1;
  color: #4a4a4a;
  font-size: 18px;
}

.tab.file {
  height: 33px;
  margin-right: 0;
  padding: 0 31px 4px;
  background: #6a6a6a;
  color: #fff;
}

.tab.active {
  height: 34px;
  margin: 0;
  padding: 0 25px 4px 24px;
  border-top: 1px solid #8f8f8f;
  background: #f8f8f8;
  color: #222;
}

.tab-tools {
  display: flex;
  align-items: center;
  gap: 10px;
  margin-left: auto;
  padding: 0 4px 5px 0;
}

.chev {
  width: 13px;
  height: 7px;
}

.tool {
  width: 20px;
  height: 20px;
}

/* 功能区 */
.ribbon {
  display: flex;
  border-bottom: 3px solid #9fa1a3;
  background: #f8f8f8;
}

.group {
  display: flex;
  flex-direction: column;
  border-right: 1px solid #c0c2c4;
}

.group-body {
  display: flex;
  justify-content: center;
  gap: 10px;
  height: 104px;
  padding: 0 8px;
}

.group-name {
  height: 28px;
  padding: 0 5px;
  justify-content: center;
  gap: 5px;
  background: #edeff1;
}

.ribbon-rest {
  flex: 1;
  margin-top: 104px;
  background: #edeff1;
}

.big {
  flex-direction: column;
  min-width: 40px;
  padding-top: 7px;
}

.big svg {
  width: 40px;
  height: 40px;
}

.big span:nth-child(2) {
  margin: 10px 0 6px;
}

.col {
  display: flex;
  flex-direction: column;
}

.cmd {
  height: 34px;
}

.cmd svg {
  width: 20px;
  height: 20px;
  margin-right: 5px;
}

.cmd .arrow {
  margin: 0 -1px 0 8px;
}

.cmd.off {
  color: #adadad;
}

/* 工作区 */
.work {
  flex: 1;
  display: flex;
  min-height: 400px;
}

.sidebar {
  display: flex;
  flex-direction: column;
  width: 292px;
  border-right: 3px double #9a9c9e;
  background: #edeff2;
}

.side-tabs {
  display: flex;
}

.side-tab {
  flex: 94 1 0;
  min-width: 0;
  height: 37px;
  gap: 4px;
  padding: 0 0 2px 7px;
  box-sizing: border-box;
  border: solid #a7a9ab;
  border-width: 1px 1px 1px 0;
  background: #dcdfe1;
  color: #686868;
}

.side-tab.files {
  flex-grow: 104;
  padding-left: 9px;
}

.side-tab.active {
  padding-left: 8px;
  border-width: 0 1px 0 0;
  background: #edeff2;
  color: #333;
}

.side-tab svg {
  width: 26px;
  height: 26px;
}

.tree-head {
  display: flex;
  align-items: center;
  gap: 10px;
  height: 35px;
  padding: 0 11px 0 35px;
}

.tree-head strong {
  margin-right: auto;
}

.tree-head button {
  gap: 8px;
}

.tree-head svg {
  width: 26px;
  height: 26px;
}

.tree {
  flex: 1;
  margin: 0 6px 5px 10px;
  padding: 0;
  border-top: 1px solid #cfd1d3;
  background: #fdfdfd;
  list-style: none;
}

.tree li {
  display: flex;
  align-items: center;
  height: 26px;
  padding-left: 11px;
}

.tree li.root {
  padding-left: 4px;
}

.tree svg {
  width: 20px;
  height: 20px;
  margin-right: 6px;
}

.expander {
  width: 9px;
  height: 10px;
  margin-right: 9px;
}

.expander.shown {
  background: #8c8c8c;
  clip-path: polygon(0 0, 100% 50%, 0 100%);
}

.canvas {
  position: relative;
  flex: 1;
  min-width: 0;
  overflow: hidden;
  background: #e8eaee;
}

.model {
  width: 100%;
  height: 100%;
}

.view-bar {
  position: absolute;
  top: 7px;
  left: 50%;
  display: flex;
  gap: 4px;
  padding: 3px 2px;
  border: 1px solid #9c9c9c;
  background: #f8f8f8;
  transform: translateX(-50%);
}

.view-bar button {
  position: relative;
  width: 29px;
  height: 29px;
  justify-content: center;
}

.view-bar svg {
  width: 20px;
  height: 20px;
}

.view-bar .on {
  background: #dedfe1;
  box-shadow: inset 0 0 0 1px #a9a9a9;
}

.view-bar .more::after {
  content: "";
  position: absolute;
  right: 0;
  bottom: 2px;
  width: 4px;
  height: 4px;
  background: #555;
  clip-path: polygon(100% 0, 100% 100%, 0 100%);
}

/* 状态栏 */
.status {
  display: flex;
  align-items: center;
  height: 38px;
  padding-left: 7px;
  border-top: 2px solid #98999b;
  background: #eef0f1;
  box-shadow: inset 0 4px #dfe0e1;
}

.status-btn {
  width: 26px;
  height: 26px;
  margin: 8px 4px 0 0;
  justify-content: center;
}

.status-btn svg {
  width: 20px;
  height: 20px;
}

.status-btn.on {
  background: #dfe1e3;
  box-shadow: inset 0 0 0 1px #a9a9a9;
}

.status-btn.on svg {
  width: 24px;
  height: 24px;
}

.status-sep {
  width: 1px;
  height: 32px;
  margin: 4px 0 0 6px;
  background: #b0b2b4;
}

.status-sep.push {
  margin-left: auto;
}

.find {
  display: flex;
  height: 30px;
  margin: 4px 112px 0 48px;
  padding: 0 2px;
  border: solid #b0b2b4;
  border-width: 0 1px;
}

.find button {
  width: 34px;
  justify-content: center;
  box-sizing: border-box;
  border: 1px solid #c3c5c7;
  background: #fbfbfb;
}

.find svg {
  width: 20px;
  height: 20px;
}

.find .find-menu {
  width: 17px;
  border-left: 0;
}

.filter {
  display: grid;
  width: 205px;
  height: 28px;
  margin-top: 4px;
}

.filter select,
.filter-arrow {
  grid-area: 1 / 1;
}

.filter select {
  padding: 0 8px;
  border: 1px solid #a7a9ab;
  border-radius: 0;
  background: #f9f9f9;
  color: #3c3c3c;
  font: inherit;
  appearance: none;
}

.filter-arrow {
  display: flex;
  align-items: center;
  justify-content: center;
  justify-self: end;
  width: 18px;
  margin: 1px 1px 1px 0;
  border-left: 1px solid #a7a9ab;
  pointer-events: none;
}

.grip {
  align-self: flex-end;
  width: 14px;
  height: 14px;
  margin: 0 2px 0 5px;
}
</style>
